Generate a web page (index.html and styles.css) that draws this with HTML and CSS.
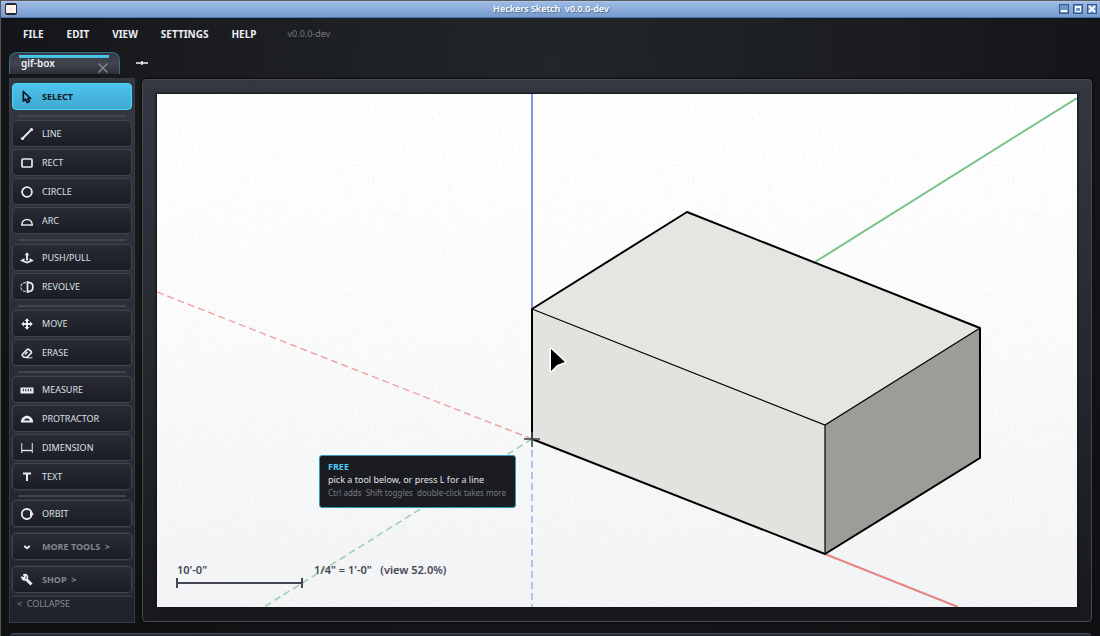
FILE: index.html
```html
<!DOCTYPE html>
<html lang="en">
<head>
<meta charset="utf-8">
<title>Heckers Sketch v0.0.0-dev</title>
<link rel="stylesheet" href="styles.css">
</head>
<body>
<header class="titlebar">
  <svg class="app-icon" viewBox="0 0 12 12"><rect x="0.5" y="0.5" width="11" height="11" rx="1" fill="#fff4ec" stroke="#252630"/><path d="M1 1.5h10M1 10.5h10" stroke="#252630"/><path d="M4 5h4M4 7h4" stroke="#e6dede"/></svg>
  <h1 class="window-title">Heckers Sketch&nbsp; v0.0.0-dev</h1>
  <div class="window-buttons">
    <button class="window-button" aria-label="Minimize"><svg viewBox="0 0 8 8"><path d="M1 6h6" stroke="#fff" stroke-width="2"/></svg></button>
    <button class="window-button" aria-label="Maximize"><svg viewBox="0 0 8 8"><path d="M1.5 1v5.5h5V1" fill="none" stroke="#fff"/><path d="M1 2h6" stroke="#fff" stroke-width="2"/></svg></button>
    <button class="window-button" aria-label="Close"><svg viewBox="0 0 8 8"><path d="M1 1l6 6M7 1L1 7" stroke="#fff" stroke-width="2"/></svg></button>
  </div>
</header>
<nav class="menubar">
  <button class="menu">FILE</button>
  <button class="menu">EDIT</button>
  <button class="menu">VIEW</button>
  <button class="menu">SETTINGS</button>
  <button class="menu">HELP</button>
  <span class="version">v0.0.0-dev</span>
</nav>
<div class="tabs">
  <div class="tab">
    <button class="tab-name">gif-box</button>
    <button class="tab-close" aria-label="Close tab"><svg viewBox="0 0 10 10"><path d="M0.5 0.5l9 9M9.5 0.5l-9 9" stroke="#8b8e98" stroke-width="1.2"/></svg></button>
  </div>
  <button class="tab-add" aria-label="New tab"><svg viewBox="0 0 12 4"><path d="M0 2h12" stroke="#b9bbc2" stroke-width="2"/><path d="M6 0v4" stroke="#fff" stroke-width="1.4"/></svg></button>
</div>
<main class="workspace">
  <aside class="tools">
    <button class="tool tool-active"><svg class="icon" viewBox="0 0 14 14"><path d="M3.3 1.5v9.500l2.400-1.800 1.600 3.400 2.200-1-1.600-3.100h2.800z" fill="none" stroke="#111821" stroke-width="1.7" stroke-linejoin="round"/></svg>SELECT</button>
    <hr class="divider">
    <button class="tool"><svg class="icon" viewBox="0 0 14 14"><path d="M2.5 11.5l9-9" stroke="#e9ebf3" stroke-width="1.8"/><circle cx="2.5" cy="11.5" r="1.6" fill="#e9ebf3"/><circle cx="11.5" cy="2.5" r="1.6" fill="#e9ebf3"/></svg>LINE</button>
    <button class="tool"><svg class="icon" viewBox="0 0 14 14"><rect x="2" y="3" width="10" height="8" rx="1" fill="none" stroke="#e9ebf3" stroke-width="1.7"/></svg>RECT</button>
    <button class="tool"><svg class="icon" viewBox="0 0 14 14"><circle cx="7" cy="7" r="4.9" fill="none" stroke="#e9ebf3" stroke-width="1.8"/></svg>CIRCLE</button>
    <button class="tool"><svg class="icon" viewBox="0 0 14 14"><path d="M1.8 11c0-7.400 10.400-7.400 10.400 0" fill="none" stroke="#e9ebf3" stroke-width="1.6"/><path d="M1 11h12" stroke="#e9ebf3" stroke-width="1.4"/></svg>ARC</button>
    <hr class="divider">
    <button class="tool"><svg class="icon" viewBox="0 0 14 14"><path d="M7 3v6.5" stroke="#e9ebf3" stroke-width="1.9"/><path d="M4.6 4.2L7 1.2l2.4 3z" fill="#e9ebf3"/><path d="M4.5 8L2 9.5 7 11.5l5-2L9.5 8" fill="none" stroke="#e9ebf3" stroke-width="1.7"/></svg>PUSH/PULL</button>
    <button class="tool"><svg class="icon" viewBox="0 0 14 14"><path d="M7.5 1v12" stroke="#e9ebf3" stroke-width="1.7"/><path d="M8 2.6h1.5c4.5.4 4.5 8.400 0 8.800H8" fill="none" stroke="#e9ebf3" stroke-width="1.8"/><path d="M6 2.6H4.8C-.4 3-.4 11 4.8 11.4H6" fill="none" stroke="#b7bac5" stroke-width="1.2" stroke-dasharray="3 1"/></svg>REVOLVE</button>
    <hr class="divider">
    <button class="tool"><svg class="icon" viewBox="0 0 14 14"><path d="M7 2.5v9M2.5 7h9" stroke="#e9ebf3" stroke-width="2"/><path d="M4.5 4L7 1.2 9.5 4zM4.5 10L7 12.8 9.5 10zM4 4.5L1.2 7 4 9.5zM10 4.5L12.8 7 10 9.5z" fill="#e9ebf3"/></svg>MOVE</button>
    <button class="tool"><svg class="icon" viewBox="0 0 14 14"><path d="M2.200 8.500l4.800-5c.6-.6 1.200-.6 1.800 0l2.300 1.800c.6.5.6 1.200 0 1.800l-4 4.200H4.200L2.200 9.500zM5 8.500l2.500-2.700" fill="none" stroke="#e9ebf3" stroke-width="1.6" stroke-linejoin="round"/><path d="M6 11.800h6.500" stroke="#e9ebf3"/></svg>ERASE</button>
    <hr class="divider">
    <button class="tool"><svg class="icon" viewBox="0 0 14 14"><rect x="0.5" y="4.5" width="13" height="6" rx="0.5" fill="#e9ebf3"/><path d="M3.3 5.800v2.500M5.800 5.800v2.500M8.300 5.800v2.500M10.800 5.800v2.500" stroke="#22252d"/></svg>MEASURE</button>
    <button class="tool"><svg class="icon" viewBox="0 0 14 14"><path d="M0.8 10.5C1 1.5 13 1.5 13.2 10.5z" fill="#e9ebf3"/><path d="M4.2 8.5c.4-2.600 5.200-2.600 5.600 0z" fill="#22252d"/></svg>PROTRACTOR</button>
    <button class="tool"><svg class="icon" viewBox="0 0 14 14"><path d="M1.7 2v10M12.3 2v10" stroke="#c7cad4" stroke-width="1.2"/><path d="M2 9.5h10" stroke="#e9ebf3" stroke-width="1.4"/></svg>DIMENSION</button>
    <button class="tool"><svg class="icon" viewBox="0 0 14 14"><path d="M3 3.5h8M7 3.5V11" stroke="#e9ebf3" stroke-width="2"/></svg>TEXT</button>
    <hr class="divider">
    <button class="tool"><svg class="icon" viewBox="0 0 14 14"><circle cx="6.8" cy="7" r="5" fill="none" stroke="#e9ebf3" stroke-width="1.8"/><path d="M10 4.3l3.800 2.700-3.800 2.700z" fill="#e9ebf3"/></svg>ORBIT</button>
    <button class="tool tool-group"><svg class="icon" viewBox="0 0 14 14"><path d="M4.2 6l2.8 2.200L9.8 6" fill="none" stroke="#e9ebf3" stroke-width="1.9"/></svg>MORE TOOLS&nbsp; &gt;</button>
    <button class="tool tool-group"><svg class="icon" viewBox="0 0 14 14"><path d="M6.5 6.5l5 5" stroke="#e9ebf3" stroke-width="3"/><path d="M4 1.8c2.5-.7 4.5 1.8 3 4C5.5 7.800 2.5 7 2 4.500L4.300 5.200 5 4z" fill="#22252d" stroke="#e9ebf3" stroke-width="1.8"/></svg>SHOP&nbsp; &gt;</button>
    <button class="collapse">&lt;&nbsp; COLLAPSE</button>
  </aside>
  <section class="stage">
    <svg class="drawing" viewBox="0 0 920 513" preserveAspectRatio="xMidYMid slice" role="img" aria-label="Box model">
      <defs>
        <linearGradient id="paper" x1="0" y1="0" x2="0" y2="1"><stop offset="0" stop-color="#ffffff"/><stop offset="0.4" stop-color="#fcfcfc"/><stop offset="1" stop-color="#f2f4f6"/></linearGradient>
        <filter id="grain" x="0" y="0" width="100%" height="100%"><feTurbulence type="fractalNoise" baseFrequency="0.8" numOctaves="2" seed="4"/><feColorMatrix values="0 0 0 0 0.5  0 0 0 0 0.5  0 0 0 0 0.52  1 0 0 0 -0.6"/></filter>
      </defs>
      <rect width="920" height="513" fill="url(#paper)"/>
      <rect width="920" height="513" filter="url(#grain)"/>
      <path d="M375 0v215" stroke="#7f97e8" stroke-width="2"/>
      <path d="M375 345v168" stroke="#b4c1ef" stroke-width="2" stroke-dasharray="7 4"/>
      <path d="M0 198l375 147" stroke="#eea6a6" stroke-width="1.5" stroke-dasharray="7 4"/>
      <path d="M375 345L107 513" stroke="#9bcfaa" stroke-width="1.5" stroke-dasharray="7 4"/>
      <path d="M658 168L920 4" stroke="#77c389" stroke-width="2"/>
      <path d="M668 460l133 53" stroke="#e48484" stroke-width="2"/>
      <path d="M375 215l155-97 293 116-155 97z" fill="#e5e6e1"/>
      <path d="M375 215l293 116v129L375 345z" fill="#e2e3de"/>
      <path d="M823 234v130l-155 96V331z" fill="#9c9d97"/>
      <path d="M375 215l293 116 155-97M668 331v129" fill="none" stroke="#000" stroke-width="1.2"/>
      <path d="M375 215l155-97 293 116v130l-155 96-293-115z" fill="none" stroke="#000" stroke-width="2" stroke-linejoin="round"/>
      <path d="M367 345h16M375 338v15" stroke="#484a54" stroke-opacity="0.8" stroke-width="2"/>
      <path d="M394 255v22l6-6 8-3z" fill="#000" stroke="#fff" stroke-width="3" stroke-linejoin="round"/>
      <path d="M394 255v22l6-6 8-3z" fill="#000"/>
      <path d="M20 489h125M20 484v10M145 484v10" stroke="#444752" stroke-width="2"/>
      <text class="scale" x="20" y="480">10'-0"</text>
      <text class="scale" x="157" y="480">1/4" = 1'-0"&#160;&#160; (view 52.0%)</text>
    </svg>
    <div class="hint" role="status">
      <strong class="hint-mode">FREE</strong>
      <span class="hint-main">pick a tool below, or press L for a line</span>
      <span class="hint-keys">Ctrl adds&nbsp; Shift toggles&nbsp; double-click takes more</span>
    </div>
  </section>
</main>
<footer class="dock"></footer>
</body>
</html>
```
FILE: styles.css
```css
* { box-sizing: border-box; }

body {
  display: flex;
  flex-direction: column;
  height: 100vh;
  margin: 0;
  overflow: hidden;
  border-left: 1px solid #57575a;
  background: radial-gradient(ellipse at 50% 10%, #22252a 0%, #1a1c20 45%, #101113 85%);
  color: #eceef4;
  font: 9px/14px "Noto Sans", sans-serif;
}

button {
  margin: 0;
  padding: 0;
  border: 0;
  background: none;
  color: inherit;
  font: inherit;
}

svg { display: block; }

.titlebar {
  display: grid;
  grid-template-columns: 1fr auto 1fr;
  align-items: center;
  flex: none;
  height: 18px;
  padding: 0 3px 0 4px;
  border-top: 1px solid #5a5a5d;
  border-bottom: 1px solid #4e71a8;
  background: linear-gradient(#9ebce6, #769ccf);
  box-shadow: inset 0 1px #acc6eb;
}

.app-icon { width: 12px; height: 12px; }

.window-title {
  margin: 0;
  color: #fff;
  font-size: 9px;
  font-weight: 600;
  line-height: 14px;
  text-shadow: 1px 1px 1px #52688c;
}

.window-buttons { display: flex; justify-content: flex-end; gap: 4px; }

.window-button {
  width: 10px;
  height: 10px;
  border: 1px solid #375a8d;
  background: #6d94ca;
}

.menubar {
  display: flex;
  align-items: center;
  flex: none;
  gap: 23px;
  height: 32px;
  padding-left: 22px;
}

.menu { font-size: 10px; font-weight: 700; }
.version { margin-left: 8px; color: #777a82; }

.tabs {
  display: flex;
  flex: none;
  gap: 16px;
  height: 28px;
  padding: 2px 8px 4px;
}

.tab {
  display: flex;
  justify-content: space-between;
  width: 111px;
  padding: 3px 11px 0;
  border: 1px solid #2f7188;
  border-bottom: 0;
  border-radius: 8px 8px 0 0;
  background: linear-gradient(#47cdf5, #47b8dc) 9px 2px / 90px 3px no-repeat, linear-gradient(#363942, #42444e 50%, #2c2f37);
}

.tab-name { align-self: flex-start; font-size: 10px; font-weight: 600; }
.tab-close { align-self: flex-end; padding-bottom: 1px; }
.tab-close svg { width: 10px; height: 10px; }
.tab-add svg { width: 12px; height: 4px; }

.workspace {
  display: flex;
  flex: none;
  gap: 7px;
  padding: 0 8px 10px;
}

.tools {
  display: flex;
  flex-direction: column;
  flex: none;
  gap: 2px;
  width: 126px;
  padding: 4px 2px 11px;
  border: 1px solid #393b43;
  background: linear-gradient(#343842, #20232d);
}

.tool {
  display: flex;
  align-items: center;
  flex: none;
  gap: 8px;
  height: 27px;
  padding-left: 7px;
  border: 1px solid #41444e;
  border-radius: 4px;
  background: linear-gradient(#282b33, #1a1d25);
  color: #dee0e6;
  box-shadow: 0 0 0 1px #2f323b;
}

.tool-active {
  border-color: #4cdaf7;
  background: linear-gradient(#4bc4ee, #40a9d2);
  color: #111821;
  font-weight: 700;
}

.tool-group { margin-top: 4px; color: #81858f; font-weight: 700; }
.icon { width: 14px; height: 14px; }

.divider {
  flex: none;
  width: 108px;
  height: 2px;
  margin: 3px auto 1px;
  border: 0;
  border-radius: 1px;
  background: #42454f;
}

.collapse {
  height: 16px;
  padding-left: 5px;
  border-top: 2px solid #343741;
  color: #858892;
  line-height: 14px;
  text-align: left;
}

.stage {
  position: relative;
  flex: 1;
  min-width: 0;
  margin: 1px 0;
  padding: 14px;
  border: 1px solid #484a50;
  border-radius: 4px;
  background: linear-gradient(#353841, #17191f);
  box-shadow: 0 0 2px 1px #0b0c0e;
}

.drawing {
  width: 100%;
  height: 100%;
  box-shadow: 0 0 2px 1px #101115;
}

.scale {
  fill: #444752;
  font: 600 11px "Noto Sans", sans-serif;
}

.hint {
  position: absolute;
  top: 375px;
  left: 176px;
  display: flex;
  flex-direction: column;
  width: 197px;
  height: 53px;
  padding: 4px 8px;
  border: 1px solid #3697b8;
  border-radius: 3px;
  background: #1a1c21;
  line-height: 13px;
  white-space: nowrap;
}

.hint-mode { color: #4ccbf3; }
.hint-main { color: #e1e2e6; }
.hint-keys { color: #787b83; font-size: 8px; }

.dock {
  flex: 1;
  min-height: 3px;
  margin: 0 9px;
  border-top: 1px solid #484a54;
  border-radius: 4px 4px 0 0;
  background: #292c35;
}
```
